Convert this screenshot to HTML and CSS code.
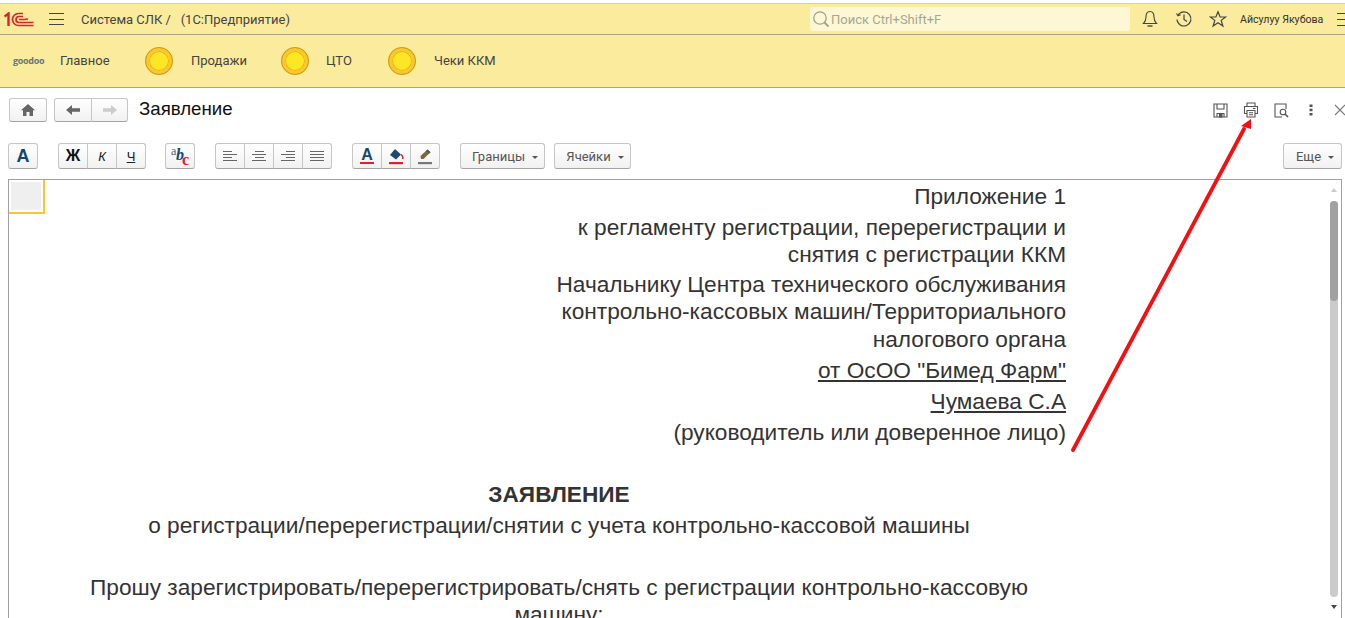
FILE: index.html
```html
<!DOCTYPE html>
<html lang="en">

<head>
    <meta charset="UTF-8">
    <meta name="viewport" content="width=device-width, initial-scale=1.0">
    <title>Заявление</title>
    <link rel="stylesheet" href="styles.css">
</head>

<body>
    <div class="topbar">
        <svg class="logo" width="30" height="15" viewBox="0 0 30 15" fill="none" stroke="#d9232a">
            <path d="M0.5 4.5L4.5 1.5V14" stroke-width="2.4" />
            <path d="M19 1.5H14.5A6 6 0 0 0 14.5 13.5H29.5" stroke-width="1.7" />
            <path d="M19 4.5H15A3 3 0 0 0 15 10.5H29.5" stroke-width="1.7" />
            <path d="M15 7.5H21A3 3 0 0 1 24 7.5" stroke-width="1.5" />
        </svg>
        <div class="burger"><i></i><i></i><i></i></div>
        <div class="app-title">Система СЛК / &nbsp;&nbsp;(1С:Предприятие)</div>
        <div class="search">
            <svg width="18" height="18" viewBox="0 0 18 18" fill="none" stroke="#a3a08c" stroke-width="1.3">
                <circle cx="8" cy="8" r="6.2" />
                <path d="M12.5 12.5L16.5 16.5" stroke-width="1.8" />
            </svg>
            <span>Поиск Ctrl+Shift+F</span>
        </div>
        <svg class="top-icon bell" width="16" height="18" viewBox="0 0 16 18" fill="none" stroke="#444" stroke-width="1.1">
            <path d="M8 1.5C5 1.5 4 4 4 7C4 10 3 12 1.5 13.5H14.5C13 12 12 10 12 7C12 4 11 1.5 8 1.5Z" />
            <path d="M5.5 16H10.5" stroke-width="1.4" />
        </svg>
        <svg class="top-icon clock" width="18" height="18" viewBox="0 0 18 18" fill="none" stroke="#444" stroke-width="1.2">
            <path d="M3.2 5A7 7 0 1 1 2 9.5" />
            <path d="M1.5 3.5L3 5.8L5.6 4.8" />
            <path d="M9 4.5V9.5L12 11.5" />
        </svg>
        <svg class="top-icon star" width="18" height="18" viewBox="0 0 18 18" fill="none" stroke="#444" stroke-width="1.2">
            <path d="M9 1.8L11.1 7H16.6L12.2 10.4L13.9 16L9 12.7L4.1 16L5.8 10.4L1.4 7H6.9Z" />
        </svg>
        <div class="user">Айсулуу Якубова</div>
        <div class="menu-cut"><i></i><i class="short"></i><i></i></div>
    </div>

    <div class="navbar">
        <div class="goodoo">goodoo</div>
        <div class="nav-item first">Главное</div>
        <div class="nav-dot"></div>
        <div class="nav-item sales">Продажи</div>
        <div class="nav-dot"></div>
        <div class="nav-item cto">ЦТО</div>
        <div class="nav-dot"></div>
        <div class="nav-item">Чеки ККМ</div>
    </div>

    <div class="titlebar">
        <div class="btn home">
            <svg width="14" height="12" viewBox="0 0 14 12" fill="#666">
                <path d="M7 0L14 6.2H12V12H8.5V8H5.5V12H2V6.2H0Z" />
            </svg>
        </div>
        <div class="group nav-group">
            <div class="btn back">
                <svg width="14" height="10" viewBox="0 0 14 10" fill="#666"><path d="M0 5L6 0V3.3H14V6.7H6V10Z" /></svg>
            </div>
            <div class="btn forward">
                <svg width="14" height="10" viewBox="0 0 14 10" fill="#ccc"><path d="M14 5L8 0V3.3H0V6.7H8V10Z" /></svg>
            </div>
        </div>
        <div class="form-title">Заявление</div>
        <div class="form-tools">
            <svg width="15" height="15" viewBox="0 0 15 15" fill="none" stroke="#555" stroke-width="1.1">
                <path d="M1 1H14V14H1Z" />
                <path d="M4 1V6H11V1" />
                <path d="M4 14V10.5H11V14" />
                <path d="M6.5 11H9V14H6.5Z" fill="#555" />
            </svg>
            <svg width="16" height="16" viewBox="0 0 16 16" fill="none" stroke="#555" stroke-width="1.1">
                <path d="M4 4.5V1H12V4.5" />
                <path d="M4 11.5H1.5V4.5H14.5V11.5H12" />
                <path d="M4 8.5H12V15H4Z" />
                <path d="M6 10.7H10M6 12.7H10" />
                <path d="M10 6.5H12.5" />
            </svg>
            <svg width="15" height="15" viewBox="0 0 15 15" fill="none" stroke="#555" stroke-width="1.1">
                <path d="M8 14H1V1H12V6" />
                <circle cx="9" cy="9" r="2.8" />
                <path d="M11 11L14 14" stroke-width="1.6" />
            </svg>
            <svg class="dots" width="4" height="12" viewBox="0 0 4 12" fill="#555">
                <rect x="0.5" y="0.5" width="3" height="2.5" />
                <rect x="0.5" y="4.7" width="3" height="2.5" />
                <rect x="0.5" y="9" width="3" height="2.5" />
            </svg>
            <svg class="close" width="12" height="12" viewBox="0 0 12 12" fill="none" stroke="#777" stroke-width="1.1">
                <path d="M1 1L11 11M11 1L1 11" />
            </svg>
        </div>
    </div>

    <div class="toolbar">
        <div class="btn tool style-a">A</div>
        <div class="group">
            <div class="btn tool bold">Ж</div>
            <div class="btn tool italic">К</div>
            <div class="btn tool under">Ч</div>
        </div>
        <div class="btn tool spell">
            <svg width="22" height="22" viewBox="0 0 22 22">
                <text x="2" y="10" class="sp-a">a</text>
                <text x="7" y="15" class="sp-b">b</text>
                <text x="13" y="20" class="sp-c">c</text>
            </svg>
        </div>
        <div class="group">
            <div class="btn tool"><div class="lines left"><i></i><i></i><i></i><i></i></div></div>
            <div class="btn tool"><div class="lines center"><i></i><i></i><i></i><i></i></div></div>
            <div class="btn tool"><div class="lines right"><i></i><i></i><i></i><i></i></div></div>
            <div class="btn tool"><div class="lines full"><i></i><i></i><i></i><i></i></div></div>
        </div>
        <div class="group">
            <div class="btn tool color-a">A<b></b></div>
            <div class="btn tool">
                <svg width="16" height="17" viewBox="0 0 16 17">
                    <path d="M7 1L13 6.5L8 11.5L2 7Z" fill="#1d4a6e" />
                    <path d="M13 6.5C15 8 15 10 14.5 11" stroke="#d9232a" stroke-width="1.5" fill="none" />
                    <rect x="1" y="14" width="14" height="2.2" fill="#d9232a" />
                </svg>
            </div>
            <div class="btn tool">
                <svg width="16" height="17" viewBox="0 0 16 17">
                    <path d="M4 11L3.5 8L10.5 1.5L13.5 4.2L6.5 11Z" fill="#7a6a3a" />
                    <path d="M10.5 1.5L13.5 4.2L12.2 5.5L9.2 2.8Z" fill="#33608a" />
                    <rect x="1" y="14" width="14" height="2.2" fill="#777" />
                </svg>
            </div>
        </div>
        <div class="btn menu borders">Границы<s></s></div>
        <div class="btn menu cells">Ячейки<s></s></div>
        <div class="btn menu more">Еще<s></s></div>
    </div>

    <div class="sheet">
        <div class="corner"></div>
        <div class="page">
            <div class="cell">Приложение 1</div>
            <div class="cell tight">к регламенту регистрации, перерегистрации и<br>снятия с регистрации ККМ</div>
            <div class="cell">Начальнику Центра технического обслуживания<br>контрольно-кассовых машин/Территориального<br>налогового органа</div>
            <div class="cell"><u>от ОсОО "Бимед Фарм"</u></div>
            <div class="cell"><u>Чумаева С.А</u></div>
            <div class="cell">(руководитель или доверенное лицо)</div>
            <div class="cell blank"></div>
            <div class="cell mid"><strong>ЗАЯВЛЕНИЕ</strong></div>
            <div class="cell mid">о регистрации/перерегистрации/снятии с учета контрольно-кассовой машины</div>
            <div class="cell blank"></div>
            <div class="cell mid">Прошу зарегистрировать/перерегистрировать/снять с регистрации контрольно-кассовую<br>машину:</div>
        </div>
        <div class="scroll">
            <span class="arrow up"></span>
            <div class="track"><div class="thumb"></div></div>
            <span class="arrow down"></span>
        </div>
    </div>

    <svg class="pointer" width="200" height="360" viewBox="0 0 200 360">
        <path d="M13 350L184 29" stroke="#f40f12" stroke-width="3.8" stroke-linecap="round" fill="none" />
        <path d="M191 19L181 26L191 29Z" fill="#f40f12" />
    </svg>
</body>

</html>
```

FILE: styles.css
```css
* {
    box-sizing: border-box;
}

html,
body {
    margin: 0;
    height: 618px;
    overflow: hidden;
}

body {
    background-color: #fff;
    font-family: "Liberation Sans", Arial, sans-serif;
    color: #333;
    position: relative;
}

.topbar {
    margin-top: 3px;
    height: 32px;
    background-color: #fbeb9d;
    border-top: 1px solid #cfcfc8;
    border-bottom: 1px solid #aba679;
    display: flex;
    align-items: center;
    font-family: Roboto, sans-serif;
    font-size: 13px;
    white-space: nowrap;
    overflow: hidden;
}

.logo {
    margin-left: 4px;
    flex: none;
}

.burger {
    margin-left: 15px;
    width: 15px;
    height: 12px;
    flex: none;
    display: flex;
    flex-direction: column;
    justify-content: space-between;
}

.burger i,
.menu-cut i {
    display: block;
    height: 1px;
    background-color: #444;
}

.app-title {
    margin-left: 17px;
    width: 729px;
    flex: none;
    color: #444;
}

.search {
    width: 320px;
    height: 24px;
    flex: none;
    background-color: #fdf7d5;
    border-radius: 2px;
    display: flex;
    align-items: center;
    padding-left: 2px;
    color: #a8a690;
    font-size: 13px;
    gap: 1px;
}

.top-icon {
    flex: none;
}

.bell {
    margin-left: 12px;
}

.clock {
    margin-left: 17px;
}

.star {
    margin-left: 16px;
}

.user {
    margin-left: 13px;
    font-size: 10.6px;
    color: #333;
    width: 97px;
    flex: none;
}

.menu-cut {
    width: 12px;
    height: 13px;
    display: flex;
    flex-direction: column;
    justify-content: space-between;
    flex: none;
}

.navbar {
    height: 53px;
    background-color: #fbeb9d;
    border-bottom: 1px solid #aba679;
    display: flex;
    align-items: center;
    font-family: Roboto, sans-serif;
    font-size: 13px;
    color: #444;
}

.goodoo {
    margin-left: 13px;
    width: 31px;
    font-family: "Open Sans", sans-serif;
    font-size: 9px;
    font-weight: 700;
    color: #66757a;
    letter-spacing: -0.3px;
    margin-bottom: 2px;
}

.nav-item {
    white-space: nowrap;
    margin-bottom: 2px;
}

.nav-item.first {
    margin-left: 16px;
    width: 84px;
}

.sales {
    width: 89px;
}

.cto {
    width: 61px;
}

.nav-dot {
    width: 28px;
    height: 28px;
    margin-left: 1px;
    margin-right: 18px;
    flex: none;
    border-radius: 50%;
    background-color: #fde724;
    border: 4px solid #fcc72e;
    outline: 1px solid #c99c18;
    outline-offset: -1px;
    box-shadow: inset 0 0 0 1px #e0b520;
}

.nav-dot + .cto {
    margin-left: -1px;
}

.titlebar {
    height: 40px;
    display: flex;
    align-items: flex-start;
    padding: 10px 0 0 9px;
}

.btn {
    background: linear-gradient(#fff, #f1f1f1);
    border: 1px solid #c6c6c6;
    border-bottom-color: #a5a5a5;
    border-radius: 3px;
    display: flex;
    align-items: center;
    justify-content: center;
    height: 24px;
    flex: none;
}

.home {
    width: 38px;
}

.group {
    display: flex;
    flex: none;
}

.group .btn {
    border-radius: 0;
    margin-left: -1px;
}

.group .btn:first-child {
    border-radius: 3px 0 0 3px;
    margin-left: 0;
}

.group .btn:last-child {
    border-radius: 0 3px 3px 0;
}

.nav-group {
    margin-left: 7px;
}

.back {
    width: 38px;
}

.forward {
    width: 37px;
}

.form-title {
    margin-left: 11px;
    font-size: 18.67px;
    line-height: 22px;
    color: #111;
    width: 1074px;
    flex: none;
}

.form-tools {
    display: flex;
    align-items: center;
    height: 24px;
    flex: none;
    gap: 15px;
}

.dots {
    margin-left: 5px;
}

.close {
    margin-left: 6px;
}

.toolbar {
    height: 51px;
    display: flex;
    align-items: flex-start;
    padding: 15px 3px 0 8px;
    gap: 20px;
}

.tool {
    width: 30px;
    height: 26px;
    font-size: 15px;
    font-weight: 700;
    color: #222;
}

.style-a {
    color: #14466e;
    font-size: 18px;
}

.bold {
    font-size: 16px;
    color: #111;
}

.italic {
    font-weight: 400;
    font-style: italic;
    font-size: 13px;
}

.under {
    font-weight: 400;
    font-size: 13px;
    text-decoration: underline;
}

.spell {
    margin-left: -1px;
}

.spell svg {
    display: block;
}

.sp-a {
    font: 12px "Liberation Serif", serif;
    fill: #47617a;
}

.sp-b {
    font: italic 700 16px "Liberation Serif", serif;
    fill: #14466e;
}

.sp-c {
    font: 700 16px "Liberation Serif", serif;
    fill: #d9232a;
}

.lines {
    width: 14px;
    display: flex;
    flex-direction: column;
    gap: 2px;
}

.lines i {
    display: block;
    height: 1px;
    width: 9px;
    background-color: #666;
}

.lines i:nth-child(even) {
    width: 14px;
}

.lines.center {
    align-items: center;
}

.lines.right {
    align-items: flex-end;
}

.lines.full i {
    width: 14px;
}

.color-a {
    position: relative;
    color: #14466e;
    font-size: 16px;
    padding-bottom: 3px;
}

.color-a b {
    position: absolute;
    left: 7px;
    right: 7px;
    bottom: 4px;
    height: 2px;
    background-color: #d9232a;
}

.menu {
    height: 26px;
    padding-left: 5px;
    font-family: Roboto, sans-serif;
    font-size: 13px;
    color: #555;
    gap: 7px;
}

.menu s {
    width: 0;
    height: 0;
    border-left: 3px solid transparent;
    border-right: 3px solid transparent;
    border-top: 3px solid #555;
    margin-top: 2px;
}

.borders {
    width: 85px;
}

.cells {
    width: 77px;
    margin-left: -11px;
}

.more {
    width: 59px;
    margin-left: auto;
}

.sheet {
    margin-left: 8px;
    margin-right: 3px;
    height: 439px;
    border: 1px solid #a0a0a0;
    border-bottom: 0;
    display: flex;
    position: relative;
}

.corner {
    position: absolute;
    left: 0;
    top: 0;
    width: 36px;
    height: 34px;
    border-right: 2px solid #fcc72e;
    border-bottom: 2px solid #fcc72e;
    background-color: #fff;
}

.corner::after {
    content: "";
    position: absolute;
    left: 2px;
    top: 2px;
    width: 30px;
    height: 28px;
    background-color: #efefef;
}

.page {
    margin-left: 43px;
    width: 1014px;
    flex: none;
    font-size: 22.67px;
    line-height: 27.5px;
    text-align: right;
    color: #333;
    padding-top: 2.5px;
}

.cell {
    padding-bottom: 3.5px;
}

.tight {
    padding-bottom: 2px;
}

.blank {
    height: 31px;
}

.mid {
    text-align: center;
}

.scroll {
    margin-left: auto;
    margin-right: 3px;
    width: 8px;
    display: flex;
    flex-direction: column;
    align-items: center;
    position: relative;
}

.track {
    position: absolute;
    top: 21px;
    left: 0;
    width: 8px;
    height: 396px;
    background-color: #cbcbcb;
    border-radius: 4px;
}

.thumb {
    height: 100px;
    background-color: #a1a1a1;
    border-radius: 4px;
}

.arrow {
    position: absolute;
    left: 1px;
    width: 0;
    height: 0;
    border-left: 3px solid transparent;
    border-right: 3px solid transparent;
}

.arrow.up {
    top: 8px;
    border-bottom: 4px solid #ccc;
}

.arrow.down {
    top: 425px;
    border-top: 4px solid #444;
}

.pointer {
    position: absolute;
    left: 1060px;
    top: 100px;
}
```
